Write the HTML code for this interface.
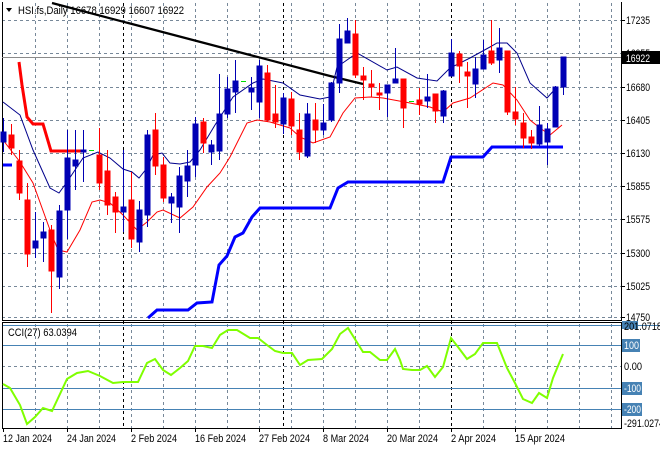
<!DOCTYPE html>
<html><head><meta charset="utf-8"><style>
html,body{margin:0;padding:0;background:#fff;width:660px;height:450px;overflow:hidden}
svg{display:block;font-family:"Liberation Sans",sans-serif;font-size:11px}
</style></head><body>
<svg width="660" height="450" viewBox="0 0 660 450">
<rect width="660" height="450" fill="#fff"/>
<g stroke="#778899" stroke-dasharray="3,3" stroke-width="1" shape-rendering="crispEdges">
<path d="M2 20.5H621M2 53.5H621M2 87.5H621M2 120.5H621M2 153.5H621M2 186.5H621M2 219.5H621M2 253.5H621M2 286.5H621M2 317.5H621"/>
<path d="M35.5 3V320M67.5 3V320M99.5 3V320M131.5 3V320M163.5 3V320M195.5 3V320M227.5 3V320M259.5 3V320M291.5 3V320M323.5 3V320M355.5 3V320M387.5 3V320M419.5 3V320M483.5 3V320M515.5 3V320M547.5 3V320M579.5 3V320M611.5 3V320"/>
<path d="M35.5 324V428M67.5 324V428M99.5 324V428M131.5 324V428M163.5 324V428M195.5 324V428M227.5 324V428M259.5 324V428M291.5 324V428M323.5 324V428M355.5 324V428M387.5 324V428M419.5 324V428M483.5 324V428M515.5 324V428M547.5 324V428M579.5 324V428M611.5 324V428"/>
<path d="M2 366.5H621"/>
</g>
<g stroke="#000" stroke-dasharray="3,3" shape-rendering="crispEdges">
<path d="M123.5 3V428M283.5 3V428M451.5 3V428"/>
</g>
<g stroke="#4682B4" shape-rendering="crispEdges">
<path d="M2 325.5H660M2 345.5H621M2 388.5H621M2 409.5H621"/>
</g>
<g stroke="#000" shape-rendering="crispEdges" fill="none">
<path d="M2.5 2V320.5H621.5V2"/>
<path d="M2.5 322V428.5H621.5V322"/>
<path d="M2 322.5H621"/>
</g>
<path d="M2 57.5H621" stroke="#8a8a8a" shape-rendering="crispEdges"/>
<path d="M52 3L330 76L363 84" stroke="#000" stroke-width="2.2" fill="none"/>
<polyline fill="none" stroke="#00008B" stroke-width="1" points="3,102 20,115 33,150 50,188 59,193 67,182 83,158 98,152 110,158 123,169 132,172 139,178 147,168 153,155 162,153 170,163 180,164 190,162 200,150 215,125 233,97 253,83 263,79 283,83 300,95 320,99 330,97 337,67 357,53 387,70 397,67 417,78 437,81 450,68 470,58 490,47 497,43 507,43 517,53 530,83 547,98 557,87"/>
<polyline fill="none" stroke="#ff0000" stroke-width="1" points="3,140 20,162 33,183 50,230 58,250 67,252 80,230 92,202 100,200 110,203 123,215 137,230 147,222 157,212 163,210 180,218 193,207 207,187 220,173 230,157 247,123 257,120 270,122 290,128 300,137 313,143 330,137 343,113 355,98 370,97 383,98 410,103 430,107 443,112 453,103 470,98 493,83 503,85 517,100 530,120 540,128 550,135 562,125"/>
<polyline fill="none" stroke="#ff0000" stroke-width="3" points="19,62 22,85 27,117 33,124 43,124 51,151 83,151"/>
<polyline fill="none" stroke="#0000ff" stroke-width="3" points="148,318 157,310 188,310 197,303 212,302 219,265 227,256 235,237 243,233 252,217 260,208 330,208 338,188 348,182 443,182 451,157 483,157 492,147 563,147"/>
<path d="M3 165H12" stroke="#0000ff" stroke-width="3"/>
<g shape-rendering="crispEdges" stroke-width="1">
<g stroke="#0000B4" fill="#0000B4">
<path d="M3.5 118V152M35.5 212V258M43.5 222V262M59.5 205V289M67.5 130V239M75.5 130V190M83.5 130V182M123.5 150V232M139.5 201V252M147.5 130V227M171.5 193V223M179.5 167V233M187.5 150V197M195.5 117V177M211.5 140V165M219.5 74V160M227.5 77V118M235.5 60V113M251.5 77V110M259.5 60V118M283.5 93V134M307.5 103V158M323.5 104V135M331.5 82V122M339.5 24V93M347.5 18V43M387.5 85V117M395.5 48V83M427.5 74V108M443.5 90V123M451.5 39V76M475.5 57V98M483.5 40V69M499.5 28V73M539.5 106V146M547.5 123V165M555.5 86V127M563.5 57V95"/>
<rect x="1" y="132" width="5" height="10"/><rect x="33" y="241" width="5" height="7"/><rect x="41" y="232" width="5" height="6"/><rect x="57" y="211" width="5" height="66"/><rect x="65" y="158" width="5" height="52"/><rect x="73" y="160" width="5" height="6"/><rect x="81" y="150" width="5" height="2"/><rect x="121" y="207" width="5" height="5"/><rect x="137" y="210" width="5" height="32"/><rect x="145" y="135" width="5" height="80"/><rect x="169" y="197" width="5" height="6"/><rect x="177" y="176" width="5" height="31"/><rect x="185" y="166" width="5" height="15"/><rect x="193" y="124" width="5" height="41"/><rect x="209" y="145" width="5" height="7"/><rect x="217" y="114" width="5" height="37"/><rect x="225" y="89" width="5" height="25"/><rect x="233" y="81" width="5" height="11"/><rect x="249" y="88" width="5" height="4"/><rect x="257" y="66" width="5" height="36"/><rect x="281" y="98" width="5" height="26"/><rect x="305" y="114" width="5" height="42"/><rect x="321" y="123" width="5" height="7"/><rect x="329" y="83" width="5" height="37"/><rect x="337" y="39" width="5" height="44"/><rect x="345" y="31" width="5" height="12"/><rect x="385" y="85" width="5" height="8"/><rect x="393" y="79" width="5" height="4"/><rect x="425" y="97" width="5" height="4"/><rect x="441" y="91" width="5" height="25"/><rect x="449" y="53" width="5" height="23"/><rect x="473" y="69" width="5" height="15"/><rect x="481" y="55" width="5" height="14"/><rect x="497" y="48" width="5" height="12"/><rect x="537" y="125" width="5" height="19"/><rect x="545" y="129" width="5" height="13"/><rect x="553" y="87" width="5" height="40"/><rect x="561" y="57" width="5" height="30"/>
</g>
<g stroke="#ff0000" fill="#ff0000">
<path d="M11.5 124V155M19.5 150V200M27.5 183V267M51.5 225V313M99.5 128V190M107.5 150V215M115.5 192V233M131.5 172V248M155.5 113V175M163.5 157V202M203.5 118V153M267.5 65V122M275.5 85V128M291.5 92V135M299.5 113V160M315.5 103V143M355.5 20V78M363.5 67V100M371.5 70V97M379.5 83V110M403.5 79V128M419.5 88V115M435.5 94V123M459.5 51V83M467.5 62V108M491.5 20V65M507.5 51V115M515.5 87V125M523.5 113V148M531.5 130V149"/>
<rect x="9" y="135" width="5" height="13"/><rect x="17" y="161" width="5" height="32"/><rect x="25" y="200" width="5" height="54"/><rect x="49" y="230" width="5" height="41"/><rect x="97" y="155" width="5" height="28"/><rect x="105" y="171" width="5" height="34"/><rect x="113" y="197" width="5" height="15"/><rect x="129" y="200" width="5" height="39"/><rect x="153" y="130" width="5" height="36"/><rect x="161" y="165" width="5" height="33"/><rect x="201" y="122" width="5" height="21"/><rect x="265" y="73" width="5" height="47"/><rect x="273" y="114" width="5" height="8"/><rect x="289" y="99" width="5" height="27"/><rect x="297" y="130" width="5" height="22"/><rect x="313" y="120" width="5" height="10"/><rect x="353" y="34" width="5" height="41"/><rect x="361" y="76" width="5" height="4"/><rect x="369" y="84" width="5" height="3"/><rect x="377" y="93" width="5" height="2"/><rect x="401" y="79" width="5" height="29"/><rect x="417" y="100" width="5" height="4"/><rect x="433" y="94" width="5" height="17"/><rect x="457" y="54" width="5" height="12"/><rect x="465" y="72" width="5" height="4"/><rect x="489" y="51" width="5" height="12"/><rect x="505" y="51" width="5" height="61"/><rect x="513" y="112" width="5" height="7"/><rect x="521" y="123" width="5" height="15"/><rect x="529" y="137" width="5" height="6"/>
</g>
<path d="M89 150.5H94M241 81.5H246M409 101.5H414" stroke="#00dd00"/>
</g>
<polyline fill="none" stroke="#7FFF00" stroke-width="2" points="3,384 10,388 20,405 27,424 35,417 43,408 52,411 67,379 77,373 88,371 100,376 113,383 123,382 138,382 147,363 155,359 163,370 171,375 180,368 188,361 195,346 203,346 212,348 220,335 228,330 237,330 250,338 258,338 267,345 275,351 283,353 292,353 300,365 308,360 322,359 332,349 340,334 348,328 363,352 370,352 380,360 387,360 395,349 400,360 403,369 412,370 420,370 427,366 435,377 443,367 451,338 458,347 467,359 475,354 483,343 497,343 507,368 515,383 523,399 532,403 539,393 547,398 553,378 563,354"/>
<path d="M6 8H12L9 12Z" fill="#000"/>
<text x="18" y="14" fill="#000" textLength="166" lengthAdjust="spacingAndGlyphs">HSI.fs,Daily  16678 16929 16607 16922</text>
<text x="8" y="336" fill="#000" textLength="69" lengthAdjust="spacingAndGlyphs">CCI(27) 63.0394</text>
<path d="M621 20.5h4M621 53.5h4M621 87.5h4M621 120.5h4M621 153.5h4M621 186.5h4M621 219.5h4M621 253.5h4M621 286.5h4M621 317.5h4" stroke="#000" shape-rendering="crispEdges"/>
<g fill="#000">
<text x="626" y="24" textLength="24" lengthAdjust="spacingAndGlyphs">17235</text>
<text x="626" y="57" textLength="24" lengthAdjust="spacingAndGlyphs">16955</text>
<text x="626" y="91" textLength="24" lengthAdjust="spacingAndGlyphs">16680</text>
<text x="626" y="124" textLength="24" lengthAdjust="spacingAndGlyphs">16405</text>
<text x="626" y="157" textLength="24" lengthAdjust="spacingAndGlyphs">16130</text>
<text x="626" y="190" textLength="24" lengthAdjust="spacingAndGlyphs">15855</text>
<text x="626" y="223" textLength="24" lengthAdjust="spacingAndGlyphs">15575</text>
<text x="626" y="257" textLength="24" lengthAdjust="spacingAndGlyphs">15300</text>
<text x="626" y="290" textLength="24" lengthAdjust="spacingAndGlyphs">15025</text>
<text x="626" y="321" textLength="24" lengthAdjust="spacingAndGlyphs">14750</text>
</g>
<rect x="622" y="51" width="38" height="13" fill="#000"/>
<text x="626" y="62" fill="#fff" textLength="24" lengthAdjust="spacingAndGlyphs">16922</text>
<rect x="622" y="321" width="16" height="8" fill="#4682B4"/>
<text x="624" y="330" fill="#000" textLength="38" lengthAdjust="spacingAndGlyphs">201.0718</text>
<rect x="622" y="339" width="18" height="13" fill="#4682B4"/>
<text x="624" y="349" fill="#fff" textLength="15" lengthAdjust="spacingAndGlyphs">100</text>
<text x="624" y="370" fill="#000" textLength="18" lengthAdjust="spacingAndGlyphs">0.00</text>
<rect x="622" y="382" width="20" height="13" fill="#4682B4"/>
<text x="624" y="392" fill="#fff" textLength="17" lengthAdjust="spacingAndGlyphs">-100</text>
<rect x="622" y="403" width="20" height="13" fill="#4682B4"/>
<text x="624" y="413" fill="#fff" textLength="17" lengthAdjust="spacingAndGlyphs">-200</text>
<text x="624" y="427" fill="#000" textLength="40" lengthAdjust="spacingAndGlyphs">-291.0274</text>
<path d="M3.5 428V432M67.5 428V432M131.5 428V432M195.5 428V432M259.5 428V432M323.5 428V432M387.5 428V432M451.5 428V432M515.5 428V432" stroke="#000" shape-rendering="crispEdges"/>
<g fill="#000">
<text x="3" y="442" textLength="49" lengthAdjust="spacingAndGlyphs">12 Jan 2024</text>
<text x="67" y="442" textLength="49" lengthAdjust="spacingAndGlyphs">24 Jan 2024</text>
<text x="131" y="442" textLength="46" lengthAdjust="spacingAndGlyphs">2 Feb 2024</text>
<text x="195" y="442" textLength="51" lengthAdjust="spacingAndGlyphs">16 Feb 2024</text>
<text x="259" y="442" textLength="51" lengthAdjust="spacingAndGlyphs">27 Feb 2024</text>
<text x="323" y="442" textLength="46" lengthAdjust="spacingAndGlyphs">8 Mar 2024</text>
<text x="387" y="442" textLength="51" lengthAdjust="spacingAndGlyphs">20 Mar 2024</text>
<text x="451" y="442" textLength="45" lengthAdjust="spacingAndGlyphs">2 Apr 2024</text>
<text x="515" y="442" textLength="50" lengthAdjust="spacingAndGlyphs">15 Apr 2024</text>
</g>
</svg>
</body></html>
